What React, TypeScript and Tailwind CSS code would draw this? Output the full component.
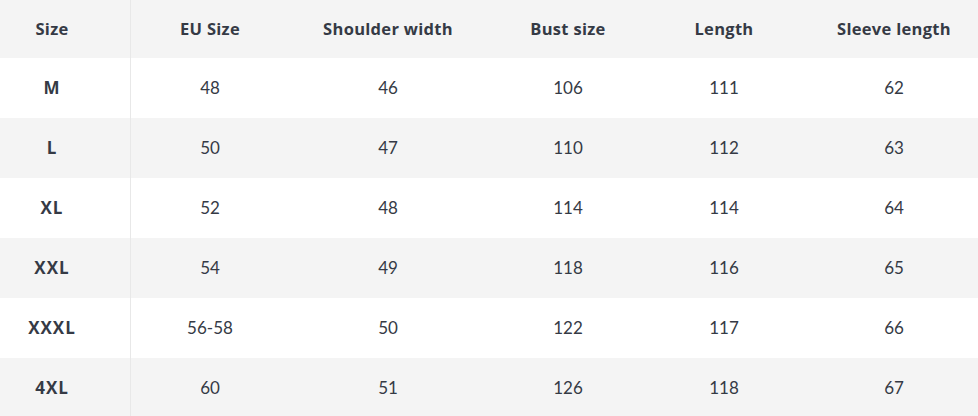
const headers = ['Size', 'EU Size', 'Shoulder width', 'Bust size', 'Length', 'Sleeve length']

const rows = [
  ['M', '48', '46', '106', '111', '62'],
  ['L', '50', '47', '110', '112', '63'],
  ['XL', '52', '48', '114', '114', '64'],
  ['XXL', '54', '49', '118', '116', '65'],
  ['XXXL', '56-58', '50', '122', '117', '66'],
  ['4XL', '60', '51', '126', '118', '67'],
]

const grid = 'grid grid-cols-[131px_158px_198px_162px_150px_179px]'

function Cell({ i, head, children }: { i: number; head?: boolean; children: React.ReactNode }) {
  let font = ''
  if (head) font = "font-['Open_Sans',sans-serif] font-bold text-[16.5px] tracking-[0.3px]"
  else if (i === 0) font = "font-['Open_Sans',sans-serif] font-bold text-[17px] tracking-[1px]"
  return (
    <div
      className={
        'flex items-center justify-center ' +
        (i === 0 ? 'pr-[26px] border-r border-[#e8e8e8] ' : '') +
        (i === 5 ? 'pl-[11px] ' : '') +
        font
      }
    >
      {children}
    </div>
  )
}

export default function App() {
  return (
    <div className="w-[978px] h-[416px] overflow-hidden bg-white text-[17px] text-[#353a45] font-['Lato',sans-serif]">
      <div className={grid + ' h-[58px] bg-[#f4f4f4]'}>
        {headers.map((h, i) => (
          <Cell key={h} i={i} head>
            {h}
          </Cell>
        ))}
      </div>
      {rows.map((r, ri) => (
        <div key={r[0]} className={grid + ' h-[60px] ' + (ri % 2 === 1 ? 'bg-[#f4f4f4]' : 'bg-white')}>
          {r.map((v, i) => (
            <Cell key={i} i={i}>
              {v}
            </Cell>
          ))}
        </div>
      ))}
    </div>
  )
}
